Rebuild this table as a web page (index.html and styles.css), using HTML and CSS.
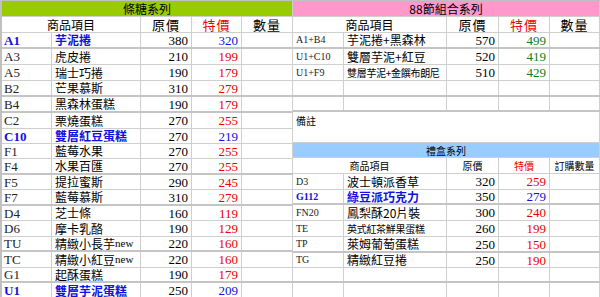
FILE: index.html
```html
<!DOCTYPE html>
<html lang="zh-Hant">
<head>
<meta charset="utf-8">
<title>價目表</title>
<link rel="stylesheet" href="styles.css">
</head>
<body>
<div class="sheet">
  <div class="left">
    <div class="row band green">條糖系列</div>
    <div class="row head">
      <div class="c span">商品項目</div>
      <div class="c op">原價</div>
      <div class="c sp red">特價</div>
      <div class="c qty">數量</div>
    </div>
    <div class="row thick hl"><div class="c code">A1</div><div class="c name">芋泥捲</div><div class="c op n">380</div><div class="c sp n blue">320</div><div class="c qty"></div></div>
    <div class="row"><div class="c code">A3</div><div class="c name">虎皮捲</div><div class="c op n">210</div><div class="c sp n red">199</div><div class="c qty"></div></div>
    <div class="row"><div class="c code">A5</div><div class="c name">瑞士巧捲</div><div class="c op n">190</div><div class="c sp n red">179</div><div class="c qty"></div></div>
    <div class="row thick"><div class="c code">B2</div><div class="c name">芒果慕斯</div><div class="c op n">310</div><div class="c sp n red">279</div><div class="c qty"></div></div>
    <div class="row thick"><div class="c code">B4</div><div class="c name">黑森林蛋糕</div><div class="c op n">190</div><div class="c sp n red">179</div><div class="c qty"></div></div>
    <div class="row"><div class="c code">C2</div><div class="c name">栗燒蛋糕</div><div class="c op n">270</div><div class="c sp n red">255</div><div class="c qty"></div></div>
    <div class="row h15 hl"><div class="c code">C10</div><div class="c name">雙層紅豆蛋糕</div><div class="c op n">270</div><div class="c sp n blue">219</div><div class="c qty"></div></div>
    <div class="row h15"><div class="c code">F1</div><div class="c name">藍莓水果</div><div class="c op n">270</div><div class="c sp n red">255</div><div class="c qty"></div></div>
    <div class="row thick"><div class="c code">F4</div><div class="c name">水果百匯</div><div class="c op n">270</div><div class="c sp n red">255</div><div class="c qty"></div></div>
    <div class="row h15"><div class="c code">F5</div><div class="c name">提拉蜜斯</div><div class="c op n">290</div><div class="c sp n red">245</div><div class="c qty"></div></div>
    <div class="row thick"><div class="c code">F7</div><div class="c name">藍莓慕斯</div><div class="c op n">310</div><div class="c sp n red">279</div><div class="c qty"></div></div>
    <div class="row h15"><div class="c code">D4</div><div class="c name">芝士條</div><div class="c op n">160</div><div class="c sp n red">119</div><div class="c qty"></div></div>
    <div class="row"><div class="c code">D6</div><div class="c name">摩卡乳酪</div><div class="c op n">190</div><div class="c sp n red">129</div><div class="c qty"></div></div>
    <div class="row h15 thick"><div class="c code">TU</div><div class="c name">精緻小長芋<span class="lat">new</span></div><div class="c op n">220</div><div class="c sp n red">160</div><div class="c qty"></div></div>
    <div class="row"><div class="c code">TC</div><div class="c name">精緻小紅豆<span class="lat">new</span></div><div class="c op n">220</div><div class="c sp n red">160</div><div class="c qty"></div></div>
    <div class="row h15 thick"><div class="c code">G1</div><div class="c name">起酥蛋糕</div><div class="c op n">190</div><div class="c sp n red">179</div><div class="c qty"></div></div>
    <div class="row hl"><div class="c code">U1</div><div class="c name">雙層芋泥蛋糕</div><div class="c op n">250</div><div class="c sp n blue">209</div><div class="c qty"></div></div>
  </div>

  <div class="right">
    <div class="row band pink">88節組合系列</div>
    <div class="row head">
      <div class="c span">商品項目</div>
      <div class="c op">原價</div>
      <div class="c sp red">特價</div>
      <div class="c qty">數量</div>
    </div>
    <div class="row thick"><div class="c code sm">A1+B4</div><div class="c name">芋泥捲+黑森林</div><div class="c op n">570</div><div class="c sp n green-t">499</div><div class="c qty"></div></div>
    <div class="row"><div class="c code sm">U1+C10</div><div class="c name">雙層芋泥+紅豆</div><div class="c op n">520</div><div class="c sp n green-t">419</div><div class="c qty"></div></div>
    <div class="row"><div class="c code sm">U1+F9</div><div class="c name xs">雙層芋泥+金饌布朗尼</div><div class="c op n">510</div><div class="c sp n green-t">429</div><div class="c qty"></div></div>
    <div class="row thick"><div class="c code"></div><div class="c name"></div><div class="c op"></div><div class="c sp"></div><div class="c qty"></div></div>
    <div class="row h15 thick"><div class="c code"></div><div class="c name"></div><div class="c op"></div><div class="c sp"></div><div class="c qty"></div></div>
    <div class="row note"><div class="c full">備註</div></div>
    <div class="row band blueband h15">禮盒系列</div>
    <div class="row head small">
      <div class="c span">商品項目</div>
      <div class="c op">原價</div>
      <div class="c sp red">特價</div>
      <div class="c qty">訂購數量</div>
    </div>
    <div class="row"><div class="c code sm">D3</div><div class="c name">波士頓派香草</div><div class="c op n">320</div><div class="c sp n red">259</div><div class="c qty"></div></div>
    <div class="row h15 thick hl"><div class="c code sm">G112</div><div class="c name">綠豆派巧克力</div><div class="c op n">350</div><div class="c sp n blue">279</div><div class="c qty"></div></div>
    <div class="row"><div class="c code sm">FN20</div><div class="c name">鳳梨酥20片裝</div><div class="c op n">300</div><div class="c sp n red">240</div><div class="c qty"></div></div>
    <div class="row"><div class="c code sm">TE</div><div class="c name xs">英式紅茶鮮果蛋糕</div><div class="c op n">260</div><div class="c sp n red">199</div><div class="c qty"></div></div>
    <div class="row thick"><div class="c code sm">TP</div><div class="c name">萊姆葡萄蛋糕</div><div class="c op n">250</div><div class="c sp n red">150</div><div class="c qty"></div></div>
    <div class="row h15"><div class="c code sm">TG</div><div class="c name">精緻紅豆捲</div><div class="c op n">250</div><div class="c sp n red">190</div><div class="c qty"></div></div>
    <div class="row h15 thick"><div class="c code"></div><div class="c name"></div><div class="c op"></div><div class="c sp"></div><div class="c qty"></div></div>
    <div class="row"><div class="c code"></div><div class="c name"></div><div class="c op"></div><div class="c sp"></div><div class="c qty"></div></div>
  </div>
</div>
</body>
</html>
```

FILE: styles.css
```css
html, body {
  margin: 0;
  padding: 0;
  background: #ffffff;
}

body {
  font-family: "Liberation Serif", "Noto Sans CJK TC", serif;
  font-size: 13px;
  color: #000000;
}

.sheet {
  display: flex;
  width: 600px;
  height: 297px;
  overflow: hidden;
  border-top: 1px solid #c0c0c0;
  box-sizing: border-box;
}

.left {
  width: 293px;
  flex: none;
  border-left: 2px solid #c0c0c0;
  box-sizing: border-box;
}

.right {
  width: 307px;
  flex: none;
}

.row {
  display: flex;
  height: 16px;
  box-sizing: border-box;
  border-bottom: 1px solid #cfcfcf;
}

.row.h15 {
  height: 15px;
}

.row.thick {
  border-bottom: 2px solid #c4c4c4;
}

.c {
  flex: none;
  box-sizing: border-box;
  border-right: 1px solid #cfcfcf;
  display: flex;
  align-items: center;
  white-space: nowrap;
  line-height: 1;
}

/* left column widths */
.left .code { width: 50px; padding-left: 2px; }
.left .name { width: 89px; padding-left: 3px; }
.left .span { width: 139px; justify-content: center; }
.left .op { width: 51px; }
.left .sp { width: 50px; }
.left .qty { width: 51px; }

/* right column widths */
.right .code { width: 51px; padding-left: 3px; }
.right .name { width: 103px; padding-left: 3px; }
.right .span { width: 154px; justify-content: center; }
.right .op { width: 52px; }
.right .sp { width: 51px; }
.right .qty { width: 50px; }

.name {
  font-family: "Noto Sans CJK TC", sans-serif;
  font-size: 12px;
}

.name.xs {
  font-size: 10px;
  letter-spacing: -0.3px;
}

.lat {
  font-family: "Liberation Serif", serif;
  font-size: 11px;
}

.code {
  font-size: 13px;
  color: #222222;
}

.code.sm {
  font-size: 10px;
}

.n {
  justify-content: flex-end;
  padding-right: 3px;
  font-size: 13px;
}

.head .c {
  font-family: "Noto Sans CJK TC", sans-serif;
  font-size: 12px;
  justify-content: center;
}

.head .op,
.head .sp,
.head .qty {
  font-size: 13px;
  letter-spacing: 1px;
}

.head.small .c {
  font-size: 10px;
  letter-spacing: 0;
}

.band {
  align-items: center;
  justify-content: center;
  font-family: "Noto Sans CJK TC", sans-serif;
  font-size: 12px;
  border-right: 1px solid #cfcfcf;
}

.green {
  background: #99cc00;
}

.pink {
  background: #ff99cc;
}

.blueband {
  background: #99ccff;
  font-size: 10px;
}

.note {
  height: 31px;
}

.note .full {
  width: 307px;
  align-items: flex-start;
  padding: 4px 0 0 3px;
  font-family: "Noto Sans CJK TC", sans-serif;
  font-size: 10px;
}

.red {
  color: #ee0000;
}

.blue {
  color: #1010e0;
}

.green-t {
  color: #108010;
}

.hl .code,
.hl .name {
  color: #1010e0;
  font-weight: bold;
}
```
